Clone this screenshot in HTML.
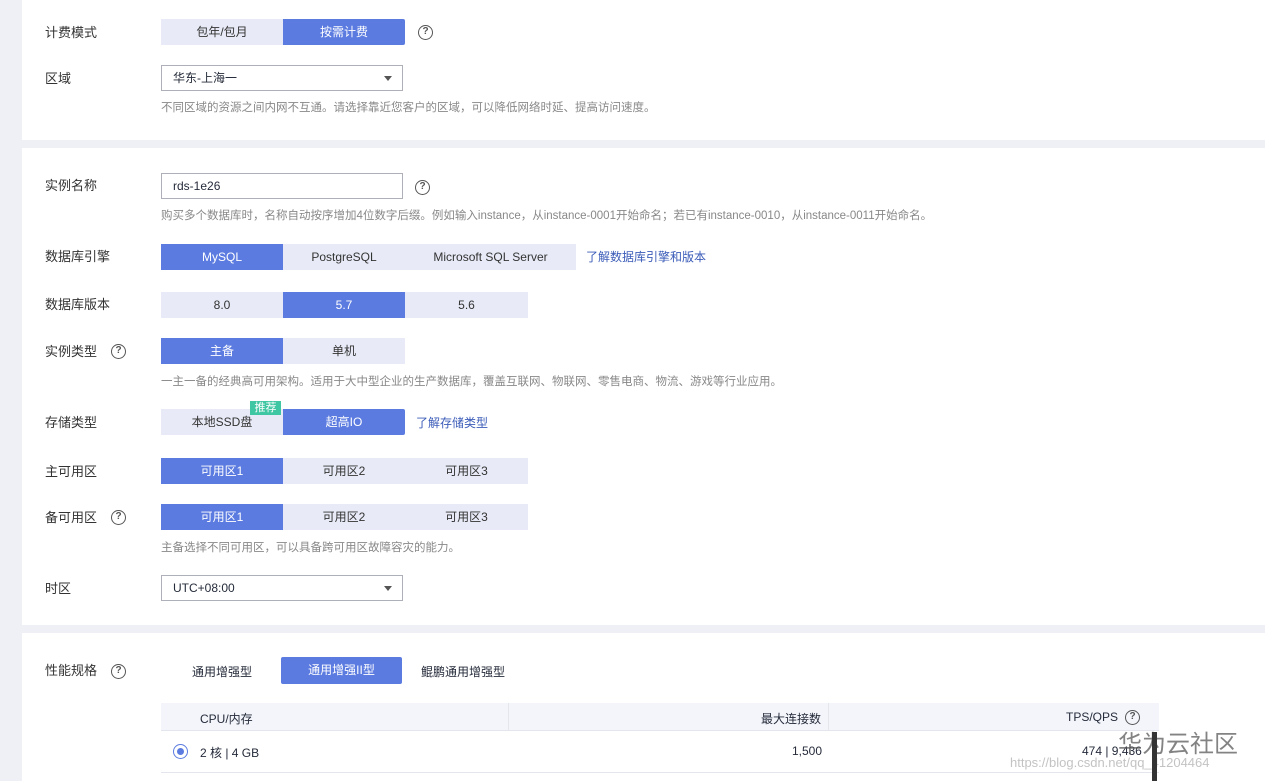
<!DOCTYPE html>
<html><head><meta charset="utf-8"><style>
*{margin:0;padding:0;box-sizing:border-box}
body{width:1265px;height:781px;overflow:hidden;background:#eff0f5;font-family:"Liberation Sans","Noto Sans CJK SC",sans-serif;font-size:12px;color:#252b3a;position:relative}
.p{position:absolute;left:22px;width:1243px;background:#fff}
.a{position:absolute}
.lbl{position:absolute;left:45px;font-size:13px;color:#333;line-height:16px}
.b{position:absolute;height:26px;line-height:26px;text-align:center;background:#e8ebf7;color:#333;font-size:12px}
.on{background:#5b7be0;color:#fff}
.hint{position:absolute;left:161px;font-size:11.5px;color:#888;line-height:14px;white-space:nowrap}
.q{position:absolute;width:15px;height:15px;border:1.3px solid #555;border-radius:50%;font-size:10px;line-height:12px;text-align:center;color:#555;font-weight:bold}
.sel{position:absolute;left:161px;width:242px;height:26px;border:1px solid #adb0b8;background:#fff;padding-left:11px;line-height:24px;font-size:12px;color:#252b3a}
.arr{position:absolute;right:10px;top:10px;border-left:4px solid transparent;border-right:4px solid transparent;border-top:5px solid #555}
.lnk{position:absolute;color:#3a5bb8;font-size:12px;line-height:16px}
</style></head><body>
<div class="p" style="top:0;height:140px"></div>
<div class="p" style="top:148px;height:477px"></div>
<div class="p" style="top:633px;height:148px"></div>

<div class="lbl" style="top:25px">计费模式</div>
<div class="b" style="left:161px;top:19px;width:122px">包年/包月</div>
<div class="b on" style="left:283px;top:19px;width:122px;border-radius:0 2px 2px 0">按需计费</div>
<div class="q" style="left:418px;top:25px">?</div>

<div class="lbl" style="top:71px">区域</div>
<div class="sel" style="top:65px">华东-上海一<span class="arr"></span></div>
<div class="hint" style="top:101px">不同区域的资源之间内网不互通。请选择靠近您客户的区域，可以降低网络时延、提高访问速度。</div>

<div class="lbl" style="top:178px">实例名称</div>
<div class="sel" style="top:173px">rds-1e26</div>
<div class="q" style="left:415px;top:180px">?</div>
<div class="hint" style="top:209px">购买多个数据库时，名称自动按序增加4位数字后缀。例如输入instance，从instance-0001开始命名；若已有instance-0010，从instance-0011开始命名。</div>

<div class="lbl" style="top:249px">数据库引擎</div>
<div class="b on" style="left:161px;top:244px;width:122px">MySQL</div>
<div class="b" style="left:283px;top:244px;width:122px">PostgreSQL</div>
<div class="b" style="left:405px;top:244px;width:171px">Microsoft SQL Server</div>
<div class="lnk" style="left:586px;top:249px">了解数据库引擎和版本</div>

<div class="lbl" style="top:297px">数据库版本</div>
<div class="b" style="left:161px;top:292px;width:122px">8.0</div>
<div class="b on" style="left:283px;top:292px;width:122px">5.7</div>
<div class="b" style="left:405px;top:292px;width:123px">5.6</div>

<div class="lbl" style="top:344px">实例类型</div>
<div class="q" style="left:111px;top:344px">?</div>
<div class="b on" style="left:161px;top:338px;width:122px">主备</div>
<div class="b" style="left:283px;top:338px;width:122px">单机</div>
<div class="hint" style="top:375px">一主一备的经典高可用架构。适用于大中型企业的生产数据库，覆盖互联网、物联网、零售电商、物流、游戏等行业应用。</div>

<div class="lbl" style="top:415px">存储类型</div>
<div class="b" style="left:161px;top:409px;width:122px">本地SSD盘</div>
<div class="a" style="left:250px;top:401px;width:31px;height:14px;background:#3fc6a2;color:#fff;font-size:11px;line-height:14px;text-align:center">推荐</div>
<div class="b on" style="left:283px;top:409px;width:122px;border-radius:0 2px 2px 0">超高IO</div>
<div class="lnk" style="left:416px;top:415px">了解存储类型</div>

<div class="lbl" style="top:464px">主可用区</div>
<div class="b on" style="left:161px;top:458px;width:122px">可用区1</div>
<div class="b" style="left:283px;top:458px;width:122px">可用区2</div>
<div class="b" style="left:405px;top:458px;width:123px">可用区3</div>

<div class="lbl" style="top:510px">备可用区</div>
<div class="q" style="left:111px;top:510px">?</div>
<div class="b on" style="left:161px;top:504px;width:122px">可用区1</div>
<div class="b" style="left:283px;top:504px;width:122px">可用区2</div>
<div class="b" style="left:405px;top:504px;width:123px">可用区3</div>
<div class="hint" style="top:541px">主备选择不同可用区，可以具备跨可用区故障容灾的能力。</div>

<div class="lbl" style="top:581px">时区</div>
<div class="sel" style="top:575px">UTC+08:00<span class="arr"></span></div>

<div class="lbl" style="top:663px">性能规格</div>
<div class="q" style="left:111px;top:664px">?</div>
<div class="a" style="left:192px;top:663px;font-size:12px">通用增强型</div>
<div class="b on" style="left:281px;top:657px;width:121px;height:27px;line-height:27px;border-radius:2px">通用增强II型</div>
<div class="a" style="left:421px;top:663px;font-size:12px">鲲鹏通用增强型</div>

<div class="a" style="left:161px;top:703px;width:998px;height:28px;background:#f3f5fb;border-bottom:1px solid #e4e6ee"></div>
<div class="a" style="left:508px;top:703px;width:1px;height:28px;background:#e4e6ee"></div>
<div class="a" style="left:828px;top:703px;width:1px;height:28px;background:#e4e6ee"></div>
<div class="a" style="left:200px;top:710px">CPU/内存</div>
<div class="a" style="left:761px;top:710px">最大连接数</div>
<div class="a" style="left:1066px;top:710px">TPS/QPS</div>
<div class="q" style="left:1125px;top:710px">?</div>
<div class="a" style="left:173px;top:744px;width:15px;height:15px;border:1.5px solid #5b7be0;border-radius:50%"><div style="margin:2.5px;width:7px;height:7px;border-radius:50%;background:#5b7be0"></div></div>
<div class="a" style="left:200px;top:744px">2 核 | 4 GB</div>
<div class="a" style="left:792px;top:744px">1,500</div>
<div class="a" style="left:1082px;top:744px">474 | 9,436</div>
<div class="a" style="left:161px;top:772px;width:998px;height:1px;background:#e4e6ee"></div>

<div class="a" style="left:1118px;top:724px;font-size:24px;color:rgba(90,90,90,.75)">华为云社区</div>
<div class="a" style="left:1010px;top:755px;font-size:13px;color:rgba(180,180,180,.8)">https://blog.csdn.net/qq_41204464</div>
<div class="a" style="left:1152px;top:732px;width:5px;height:49px;background:#333"></div>
</body></html>
